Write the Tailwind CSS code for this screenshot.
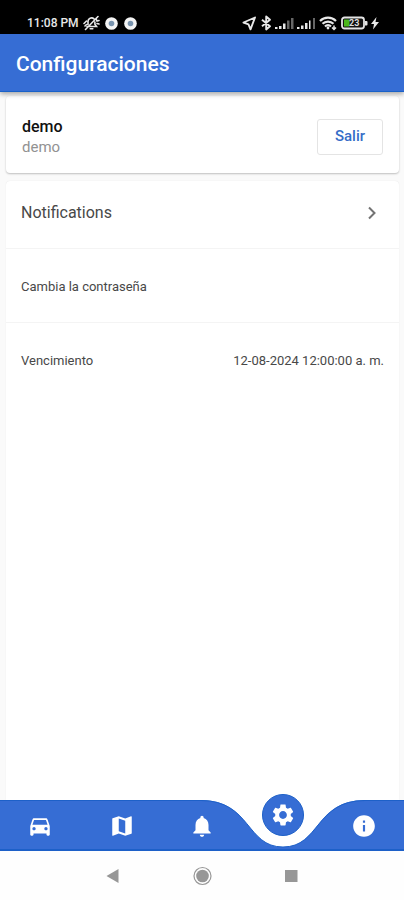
<!DOCTYPE html>
<html lang="es">
<head>
<meta charset="utf-8">
<meta name="viewport" content="width=device-width, initial-scale=1">
<title>Configuraciones</title>
<script src="https://cdn.jsdelivr.net/npm/@tailwindcss/browser@4"></script>
</head>
<body class="flex min-h-screen flex-col bg-[#fafafa] font-['Roboto','Noto_Sans',sans-serif] text-[#484848]">

<!-- System status bar -->
<div class="flex h-[34px] items-end justify-between bg-black pr-[25px] pb-[3px] pl-[27px] text-[#e8e8e8]">
  <div class="flex items-center gap-1">
    <span class="text-xs leading-4 font-medium">11:08 PM</span>
    <svg class="h-4 w-[17px]" viewBox="0 0 17 16" fill="none" stroke="currentColor" stroke-width="1.6" stroke-linecap="round"><path d="M4 11.5h9.5l-1.6-2.2V7M5 9.500V6.500a3.600 3.600 0 0 1 6-2.700M7.200 13.700h2.600M15 1.500L2.500 14.500M1 8.500l2.500-2.500M2 11l1.500-1.500M13 3.500l1 2.500 2-.5M14 8.500l2 .5"/></svg>
    <svg class="ml-px size-[13px]" viewBox="0 0 14 14"><circle cx="7" cy="7" r="6.800" fill="#f4f4f4"/><circle cx="7" cy="7" r="3" fill="#7893ae"/></svg>
    <svg class="ml-0.5 size-[13px]" viewBox="0 0 14 14"><circle cx="7" cy="7" r="6.800" fill="#f4f4f4"/><circle cx="7" cy="7" r="3" fill="#7893ae"/></svg>
  </div>
  <div class="flex items-center gap-[3px]">
    <svg class="h-4 w-[15px]" viewBox="0 0 15 16" fill="none" stroke="currentColor" stroke-width="1.900" stroke-linejoin="round"><path d="M13 2.500L1.500 7.500l5 1.800 2 5z"/></svg>
    <svg class="h-4 w-3" viewBox="0 0 12 16" fill="none" stroke="currentColor" stroke-width="1.900" stroke-linejoin="round"><path d="M2 4.700l8 6.600L6.200 14.500v-13L10 4.700l-8 6.600"/></svg>
    <svg class="h-4 w-[19px]" viewBox="0 0 19 16" fill="currentColor"><path d="M0 12h2.500v2H0zM4 11h2.500v3H4zM8 8.500h2.500V14H8z"/><path fill="#666" d="M12 5.500h2.500V14H12zM16 3h2.500v11H16z"/></svg>
    <svg class="h-4 w-[19px]" viewBox="0 0 19 16" fill="currentColor"><path d="M0 12h2.500v2H0zM4 10.500h2.500V14H4zM8 8h2.500v6H8zM12 5.500h1.500V14H12z"/><path fill="#666" d="M16 3h2v11h-2z"/></svg>
    <svg class="h-4 w-[18px]" viewBox="0 0 18 16" fill="none" stroke="currentColor" stroke-width="2.200"><path d="M1 6a11.300 11.300 0 0 1 16 0M3.500 8.800a7.800 7.800 0 0 1 11 0M6 11.400a4.200 4.200 0 0 1 6 0"/><circle cx="9" cy="13" r="1.400" fill="currentColor" stroke="none"/><path stroke-width="1.500" d="M15 10.500v4M13 12.500l2 2 2-2"/></svg>
    <svg class="ml-px h-4 w-[27px]" viewBox="0 0 27 16"><rect x="1" y="2.500" width="22" height="11" rx="2.500" fill="#111" stroke="#e4e4e4" stroke-width="1.800"/><path d="M24 6h1.500q1 0 1 1v2.500q0 1-1 1H24z" fill="#e4e4e4"/><path d="M3 4.500h5.500v7H3z" fill="#4bb71b"/><text x="8" y="11.300" font-size="9" font-weight="700" fill="#ddd">23</text></svg>
    <svg class="h-4 w-2" viewBox="0 0 8 16" fill="currentColor"><path d="M5.500 2L0 9h3l-1 5.500L8 7H4.500z"/></svg>
  </div>
</div>

<!-- App bar -->
<header class="z-10 flex h-[58px] items-center bg-[#366dd4] px-4 pt-px shadow-[inset_0_-1px_0_#1961c8,0_2px_5px_rgba(0,0,0,0.35)]">
  <h1 class="text-[21px] leading-7 font-medium text-white">Configuraciones</h1>
</header>

<main class="flex flex-1 flex-col gap-2 px-[5px] pt-1 pl-1.5">
  <section class="flex h-[77px] items-center justify-between rounded bg-white px-4 pt-1 shadow-[0_1px_2px_rgba(0,0,0,0.24)]">
    <div>
      <p class="text-base leading-5 font-medium text-[#111]">demo</p>
      <p class="text-[15px] leading-5 text-[#929292]">demo</p>
    </div>
    <button type="button" class="h-9 w-[66px] rounded-[3px] border border-[#e4e4e4] text-[15px] font-medium text-[#366dc8]">Salir</button>
  </section>

  <section class="flex-1 rounded-t bg-white text-[13px] shadow-[0_0_1px_rgba(0,0,0,0.12)]">
    <a href="#notifications" class="flex h-[68px] items-center justify-between border-b border-[#f4f4f4] pr-[19px] pb-1 pl-[15px] text-base">
      <span>Notifications</span>
      <svg class="h-[14px] w-4" viewBox="0 0 16 14" fill="none" stroke="#737373" stroke-width="2"><path d="M5 1.500L10.500 7 5 12.500"/></svg>
    </a>
    <a href="#password" class="flex h-[74px] items-center border-b border-[#f4f4f4] px-[15px] pt-0.5">Cambia la contraseña</a>
    <div class="flex h-[74px] items-center justify-between px-[15px] pt-0.5">
      <span>Vencimiento</span>
      <span>12-08-2024 12:00:00 a. m.</span>
    </div>
  </section>
</main>

<!-- Bottom navigation -->
<nav aria-label="Principal" class="grid h-[51px] grid-cols-5 bg-[#366dd4] text-white shadow-[inset_0_1px_0_#1d60c8,inset_0_-2px_0_#1d60c8]">
  <a href="#vehicles" aria-label="Vehículos" class="flex items-center justify-center pt-0.5">
    <svg class="size-[26px]" viewBox="0 0 24 24" fill="currentColor"><path d="M18.920 5.010C18.720 4.420 18.160 4 17.500 4h-11c-.66 0-1.210.42-1.420 1.010L3 11v8c0 .55.45 1 1 1h1c.55 0 1-.45 1-1v-1h12v1c0 .55.45 1 1 1h1c.55 0 1-.45 1-1v-8l-2.080-5.990zM6.500 15c-.83 0-1.500-.67-1.500-1.500S5.670 12 6.500 12s1.500.67 1.500 1.500S7.330 15 6.500 15zm11 0c-.83 0-1.500-.67-1.500-1.500s.67-1.500 1.500-1.500 1.500.67 1.500 1.500-.67 1.500-1.500 1.500zM5 10l1.500-4.500h11L19 10H5z"/></svg>
  </a>
  <a href="#map" aria-label="Mapa" class="flex items-center justify-center pl-px">
    <svg class="size-[26px]" viewBox="0 0 24 24" fill="currentColor"><path d="M20.500 3l-.16.030L15 5.100 9 3 3.360 4.900c-.21.070-.36.250-.36.480V20.500c0 .28.22.5.5.5l.16-.03L9 18.900l6 2.100 5.640-1.900c.21-.07.36-.25.36-.48V3.500c0-.28-.22-.5-.5-.5zM15 19l-6-2.110V5l6 2.110V19z"/></svg>
  </a>
  <a href="#alerts" aria-label="Alertas" class="flex items-center justify-center pl-px">
    <svg class="size-[26px]" viewBox="0 0 24 24" fill="currentColor"><path d="M12 22c1.100 0 2-.9 2-2h-4c0 1.100.89 2 2 2zm6-6v-5c0-3.070-1.640-5.640-4.500-6.320V4c0-.83-.67-1.500-1.500-1.500s-1.500.67-1.500 1.500v.68C7.630 5.360 6 7.920 6 11v5l-2 2v1h16v-1l-2-2z"/></svg>
  </a>
  <a href="#settings" aria-label="Configuraciones" aria-current="page" class="relative flex justify-center">
    <svg class="absolute top-0 left-1/2 h-12 w-[164px] max-w-none -translate-x-1/2" viewBox="0 0 164 48"><path d="M0 0C50 0 45 47 82 47S114 0 164 0z" fill="#fff"/><path d="M0 .5C50 .5 45 47 82 47S114 .5 164 .5" fill="none" stroke="#1d60c8"/></svg>
    <span class="relative -mt-[6px] flex size-[42px] items-center justify-center rounded-full border border-[#1d60c8] bg-[#366dd4]">
      <svg class="size-[26px]" viewBox="0 0 24 24" fill="currentColor"><path d="M19.140 12.940c.04-.3.060-.61.060-.94 0-.32-.02-.64-.07-.94l2.030-1.580c.18-.14.23-.41.120-.61l-1.920-3.320c-.12-.22-.37-.29-.59-.22l-2.390.96c-.5-.38-1.030-.7-1.620-.94l-.36-2.540c-.04-.24-.24-.41-.48-.41h-3.840c-.24 0-.43.17-.47.41l-.36 2.540c-.59.24-1.130.57-1.620.94l-2.390-.96c-.22-.08-.47 0-.59.22L2.740 8.870c-.12.21-.08.47.12.61l2.030 1.580c-.05.3-.09.63-.09.94s.02.64.07.94l-2.030 1.580c-.18.14-.23.41-.12.61l1.920 3.320c.12.22.37.29.59.22l2.390-.96c.5.38 1.030.7 1.620.94l.36 2.540c.05.24.24.41.48.41h3.840c.24 0 .44-.17.47-.41l.36-2.540c.59-.24 1.130-.56 1.620-.94l2.390.96c.22.080.47 0 .59-.22l1.920-3.320c.12-.22.070-.47-.12-.61l-2.010-1.580zM12 15.600c-1.980 0-3.600-1.620-3.600-3.600s1.620-3.600 3.600-3.600 3.600 1.620 3.600 3.600-1.620 3.600-3.600 3.600z"/></svg>
    </span>
  </a>
  <a href="#info" aria-label="Información" class="flex items-center justify-center pl-px">
    <svg class="size-[26px]" viewBox="0 0 24 24" fill="currentColor"><path d="M12 2C6.480 2 2 6.480 2 12s4.480 10 10 10 10-4.480 10-10S17.520 2 12 2zm1 15h-2v-6h2v6zm0-8h-2V7h2v2z"/></svg>
  </a>
</nav>

<!-- System navigation -->
<div class="flex h-[49px] items-center justify-center gap-[69px] bg-[#fefefe] text-[#979797]">
  <button type="button" aria-label="Atrás"><svg class="size-5" viewBox="0 0 20 20" fill="currentColor"><path d="M3.500 10l12-7v14z"/></svg></button>
  <button type="button" aria-label="Inicio"><svg class="size-5" viewBox="0 0 20 20"><circle cx="10.500" cy="10" r="8.500" fill="none" stroke="currentColor" stroke-width="1.200"/><circle cx="10.500" cy="10" r="6.300" fill="currentColor"/></svg></button>
  <button type="button" aria-label="Recientes"><svg class="size-5" viewBox="0 0 20 20" fill="currentColor"><path d="M4 4h12.500v12H4z"/></svg></button>
</div>
</body>
</html>
